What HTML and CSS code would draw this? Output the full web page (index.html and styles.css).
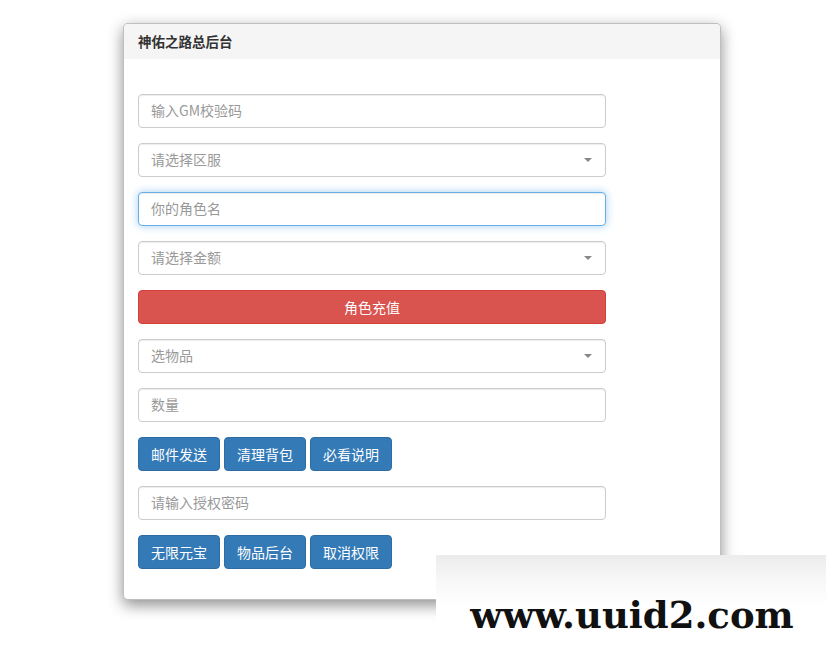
FILE: index.html
```html
<!DOCTYPE html>
<html lang="zh-CN">
<head>
<meta charset="utf-8">
<title>神佑之路总后台</title>
<link rel="stylesheet" href="styles.css">
</head>
<body>
<div class="card">
  <div class="card-head">神佑之路总后台</div>
  <div class="card-body">
    <div class="field"><input class="ctl" type="text" placeholder="输入GM校验码"></div>
    <div class="field"><div class="ctl select"><span class="ph">请选择区服</span><span class="caret"></span></div></div>
    <div class="field"><input class="ctl focus" type="text" placeholder="你的角色名"></div>
    <div class="field"><div class="ctl select"><span class="ph">请选择金额</span><span class="caret"></span></div></div>
    <div class="field"><button class="btn btn-red block">角色充值</button></div>
    <div class="field"><div class="ctl select"><span class="ph">选物品</span><span class="caret"></span></div></div>
    <div class="field"><input class="ctl" type="text" placeholder="数量"></div>
    <div class="field btns">
      <button class="btn btn-blue">邮件发送</button>
      <button class="btn btn-blue">清理背包</button>
      <button class="btn btn-blue">必看说明</button>
    </div>
    <div class="field"><input class="ctl" type="text" placeholder="请输入授权密码"></div>
    <div class="field btns">
      <button class="btn btn-blue">无限元宝</button>
      <button class="btn btn-blue">物品后台</button>
      <button class="btn btn-blue">取消权限</button>
    </div>
  </div>
</div>
<div class="watermark"><span>www.uuid2.com</span></div>
</body>
</html>
```
FILE: styles.css
```css
* { box-sizing: border-box; }
html, body { margin: 0; padding: 0; background: #fff; }
body {
  font-family: "Noto Sans CJK SC", "Noto Sans", "Liberation Sans", sans-serif;
  font-size: 14px;
  color: #333;
  padding: 23px 0 0 123px;
  height: 668px;
  overflow: hidden;
}
.card {
  width: 598px;
  border: 1px solid rgba(0,0,0,.25);
  border-radius: 5px;
  background: #fff;
  box-shadow: 0 5px 15px rgba(0,0,0,.45);
  overflow: hidden;
}
.card-head {
  background: #f5f5f5;
  height: 35px;
  padding: 0 14px;
  font-weight: 700;
  font-size: 13.5px;
  line-height: 35px;
  color: #333;
}
.card-body {
  padding: 35px 114px 15px 14px;
}
.field { margin-bottom: 15px; }
.ctl {
  display: block;
  width: 468px;
  height: 34px;
  padding: 5px 12px 7px;
  font-family: inherit;
  font-size: 14px;
  color: #555;
  background: #fff;
  border: 1px solid #ccc;
  border-radius: 4px;
  box-shadow: inset 0 1px 1px rgba(0,0,0,.075);
  outline: none;
}
.ctl::placeholder { color: #999; }
.ctl.focus {
  border-color: #66afe9;
  box-shadow: inset 0 1px 1px rgba(0,0,0,.075), 0 0 8px rgba(102,175,233,.6);
}
.select {
  display: flex;
  align-items: center;
  justify-content: space-between;
  line-height: 20px;
}
.ph { color: #999; }
.caret {
  width: 0; height: 0;
  border-left: 4px solid transparent;
  border-right: 4px solid transparent;
  border-top: 4px solid #888;
  margin-right: 1px;
  margin-top: 2px;
}
.btns { display: flex; gap: 4px; }
.btn {
  height: 34px;
  padding: 0 12px;
  font-family: inherit;
  font-size: 14px;
  color: #fff;
  border: 1px solid transparent;
  border-radius: 4px;
  line-height: 31px;
  cursor: pointer;
}
.btn-blue { background: #337ab7; border-color: #2e6da4; width: 82px; }
.btn-red { background: #d9534f; border-color: #d43f3a; }
.block { display: block; width: 468px; }
.watermark {
  position: absolute;
  left: 436px;
  top: 555px;
  width: 390px;
  height: 113px;
  background: linear-gradient(to bottom, #ececec 0, #f7f7f7 22%, #fff 45%, #fff 100%);
  display: flex;
  align-items: center;
  justify-content: center;
  padding: 6px 0 0 0;
}
.watermark span {
  font-family: "DejaVu Serif", "Liberation Serif", serif;
  font-weight: 700;
  font-size: 37px;
  color: #111;
  margin-left: 2px;
}
```
